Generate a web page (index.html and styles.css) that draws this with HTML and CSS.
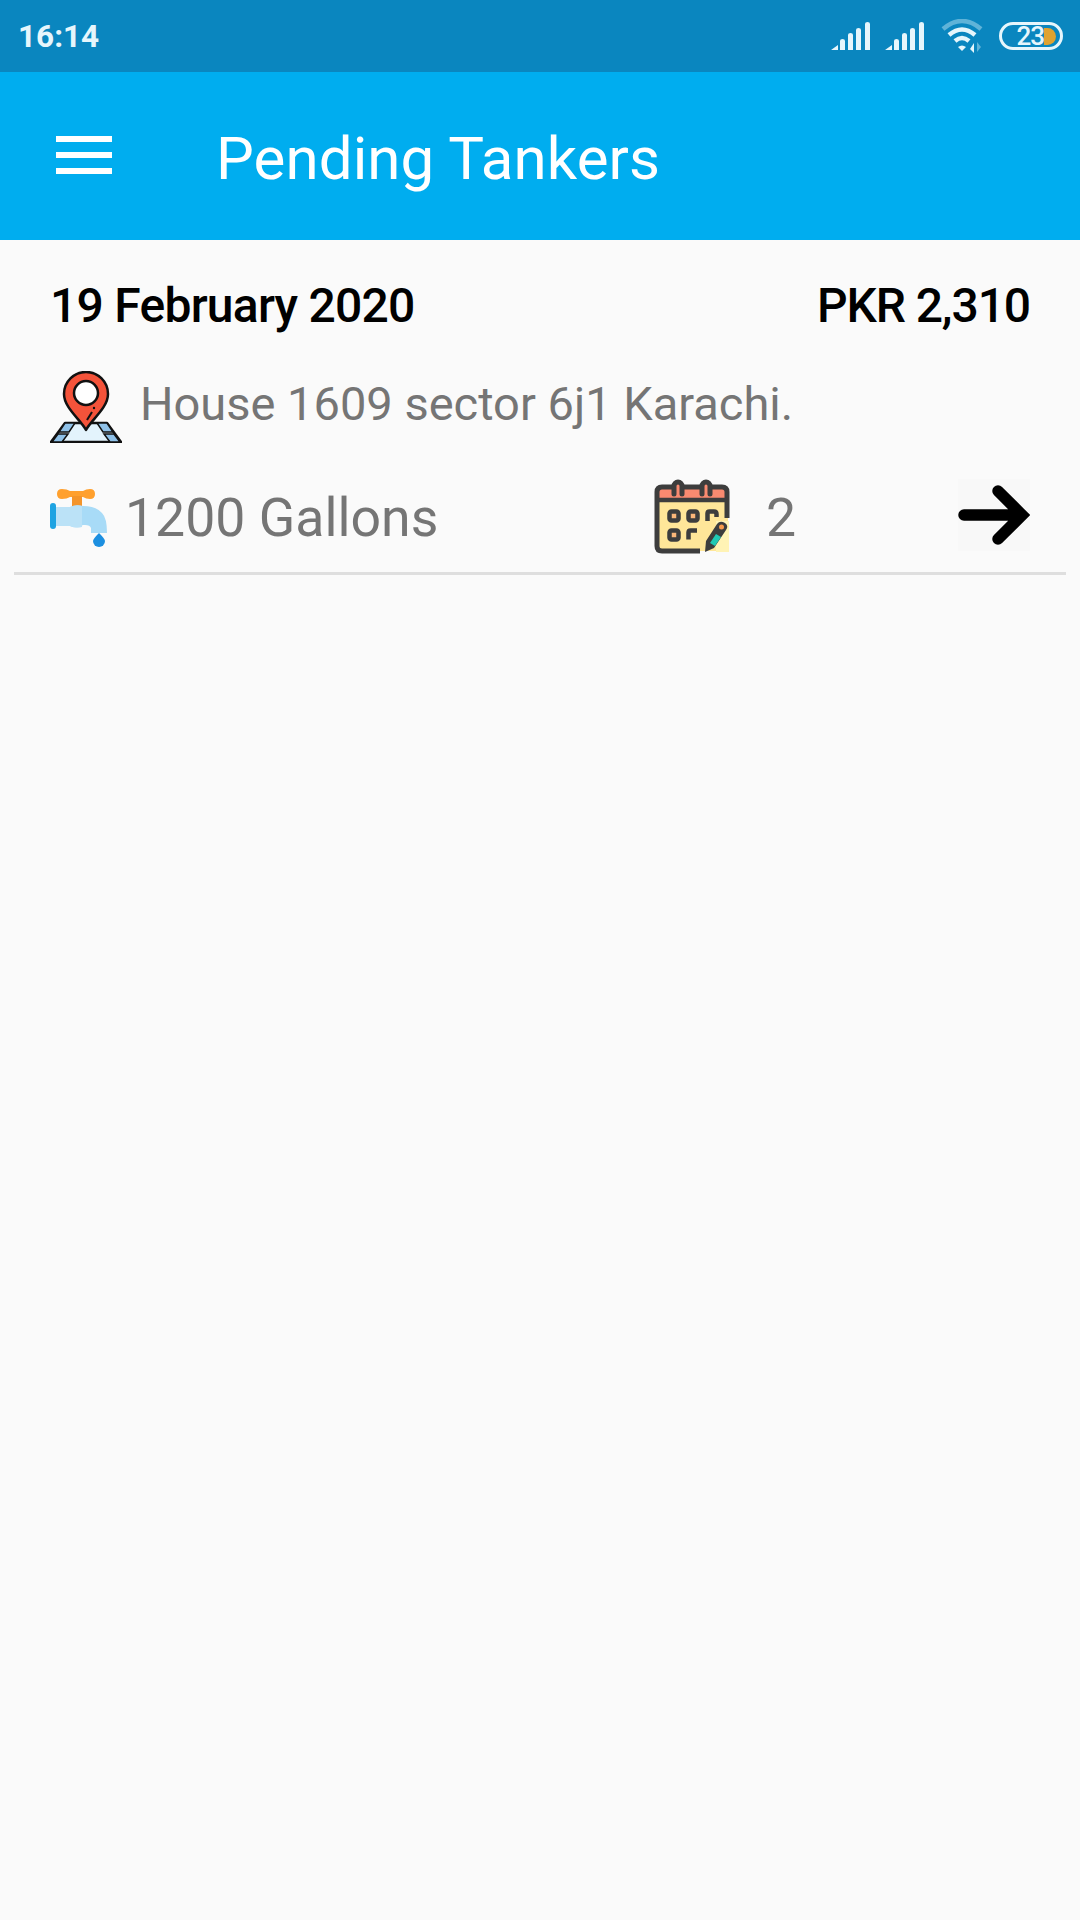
FILE: index.html
```html
<!DOCTYPE html>
<html lang="en">
<head>
    <meta charset="UTF-8">
    <meta name="viewport" content="width=device-width, initial-scale=1.0">
    <title>Pending Tankers</title>
    <link rel="stylesheet" href="styles.css">
</head>
<body>
    <div class="status-bar">
        <span class="clock">16:14</span>
        <div class="status-icons">
            <svg class="signal" width="42" height="30" viewBox="0 0 42 30">
                <path d="M1 29 L8 24 V29 Z M10 20 Q10 18 12.500 18 Q15 18 15 20 V29 H10 Z M18 14 Q18 12 20.500 12 Q23 12 23 14 V29 H18 Z M26 9 Q26 7 28.500 7 Q31 7 31 9 V29 H26 Z M35 3 Q35 1 37.500 1 Q40 1 40 3 V29 H35 Z" fill="#e6f6fc"/>
            </svg>
            <svg class="signal" width="42" height="30" viewBox="0 0 42 30">
                <path d="M1 29 L8 24 V29 Z M10 20 Q10 18 12.500 18 Q15 18 15 20 V29 H10 Z M18 14 Q18 12 20.500 12 Q23 12 23 14 V29 H18 Z M26 9 Q26 7 28.500 7 Q31 7 31 9 V29 H26 Z M35 3 Q35 1 37.500 1 Q40 1 40 3 V29 H35 Z" fill="#e6f6fc"/>
            </svg>
            <svg class="wifi" width="44" height="34" viewBox="0 0 44 34">
                <path d="M2 10 Q21 -6 40 10" fill="none" stroke="#5fb3d8" stroke-width="4.500"/>
                <path d="M8 16 Q21 5 34 16" fill="none" stroke="#e6f6fc" stroke-width="4.500"/>
                <path d="M14 22 Q21 16 28 22" fill="none" stroke="#e6f6fc" stroke-width="4.500"/>
                <path d="M17 28 Q21 25 25 28 L21 32 Z" fill="#e6f6fc"/>
                <path d="M33 24 V34 L29 30 Z" fill="#e6f6fc"/>
                <path d="M36 23 V33 L40 28 Z" fill="#5fb3d8"/>
            </svg>
            <div class="battery">
                <span class="battery-level">23</span>
                <span class="battery-fill"></span>
            </div>
        </div>
    </div>

    <div class="toolbar">
        <div class="menu-icon">
            <span></span>
            <span></span>
            <span></span>
        </div>
        <h1 class="toolbar-title">Pending Tankers</h1>
    </div>

    <div class="tanker-row">
        <div class="row-head">
            <span class="row-date">19 February 2020</span>
            <span class="row-price">PKR 2,310</span>
        </div>

        <div class="row-address">
            <svg class="pin-icon" width="72" height="72" viewBox="0 0 72 72">
                <!-- map sheet under the pin -->
                <path d="M15 52 H57 L71 71 H1 Z" fill="#e3f3fc" stroke="#111" stroke-width="2.500" stroke-linejoin="round"/>
                <path d="M15 52 H25 L19 61 H9 Z M47 52 H57 L63 61 H53 Z M8 63 H18 L12 71 H2 Z M54 63 H64 L70 71 H60 Z" fill="#8fc1e8" stroke="#111" stroke-width="1.500"/>
                <path d="M36 59 C31 49 14 37 14 23 A22 22 0 0 1 58 23 C58 37 41 49 36 59 Z" fill="#f4533a" stroke="#111" stroke-width="2.500" stroke-linejoin="round"/>
                <circle cx="36" cy="22" r="12" fill="#fff" stroke="#111" stroke-width="2.500"/>
                <path d="M37 49 L42 41" stroke="#111" stroke-width="2"/>
                <circle cx="44" cy="37" r="1.200" fill="#111"/>
            </svg>
            <span class="address-text">House 1609 sector 6j1 Karachi.</span>
        </div>

        <div class="row-details">
            <div class="detail-gallons">
                <svg class="tap-icon" width="58" height="60" viewBox="0 0 58 60">
                    <path d="M12 12 Q7 12 7 7 Q7 2 12 2 Q17 2 20 4 H33 Q36 2 40 2 Q45 2 45 7 Q45 12 40 12 Q36 12 33 10 H20 Q17 12 12 12 Z" fill="#ffa02e"/>
                    <path d="M22 9 H32 V20 H22 Z" fill="#f4952b"/>
                    <path d="M6 20 H20 Q26 17 33 19 Q46 19 52 26 Q57 31 57 46 H41 V41 Q40 38 35 38 H33 Q26 42 20 39 H6 Z" fill="#a8dbf7"/>
                    <path d="M6 20 H20 Q26 17 32 19 V40 Q26 42 20 39 H6 Z" fill="#bbe2f7"/>
                    <path d="M0 19 Q0 16 3 16 Q6 16 6 19 V39 Q6 42 3 42 Q0 42 0 39 Z" fill="#1ea3e2"/>
                    <path d="M49 46 Q55 52 55 54 A6 6 0 0 1 43 54 Q43 52 49 46 Z" fill="#1c8fe0"/>
                </svg>
                <span>1200 Gallons</span>
            </div>
            <div class="detail-count">
                <svg class="calendar-icon" width="76" height="76" viewBox="0 0 76 76">
                    <rect x="2" y="10" width="72" height="62" rx="6" fill="#ffe699"/>
                    <path d="M3 21 V13 Q3 8 8 8 H68 Q73 8 73 13 V21 Z" fill="#f98a70"/>
                    <path d="M46 72 H8 Q3 72 3 67 V13 Q3 8 8 8 H68 Q73 8 73 13 V39" fill="none" stroke="#3d3d3d" stroke-width="5"/>
                    <path d="M3 21 H73" stroke="#3d3d3d" stroke-width="4.500"/>
                    <path d="M20 15 V7 A4 4 0 0 1 28 7 V15 M48 15 V7 A4 4 0 0 1 56 7 V15" fill="#f98a70" stroke="#3d3d3d" stroke-width="5" stroke-linecap="round"/>
                    <g fill="#fbb77a" stroke="#3d3d3d" stroke-width="4.500">
                        <rect x="15.500" y="32.500" width="9" height="9" rx="2"/>
                        <rect x="34.500" y="32.500" width="9" height="9" rx="2"/>
                        <rect x="15.500" y="51.500" width="9" height="9" rx="2"/>
                    </g>
                    <path d="M53.500 42 V34.500 Q53.500 32.500 55.500 32.500 H60 Q62.500 32.500 62.500 35 V38 M34.500 60.500 V53.500 Q34.500 51.500 36.500 51.500 H43" fill="none" stroke="#3d3d3d" stroke-width="4.500"/>
                    <rect x="62" y="42" width="13" height="31" fill="#fff3b5"/>
                    <path d="M51 73 L52 62 L63 45 Q66 41 71 44 Q75 47 72 51 L60 69 Z" fill="#3d3d3d"/>
                    <path d="M56 64 L62 55 L67 58 L61 67 Z" fill="#20c9b4"/>
                    <circle cx="67.500" cy="48" r="2.500" fill="#f79a4d"/>
                </svg>
                <span>2</span>
            </div>
            <div class="detail-arrow">
                <svg width="72" height="72" viewBox="0 0 72 72">
                    <path d="M6 36 H60 M40 12 L64 36 L40 60" fill="none" stroke="#000" stroke-width="11.500" stroke-linecap="round" stroke-linejoin="miter"/>
                </svg>
            </div>
        </div>
    </div>
</body>
</html>
```

FILE: styles.css
```css
body {
    margin: 0;
    min-height: 1920px;
    background-color: #fafafa;
    font-family: Roboto, "Noto Sans", sans-serif;
}

.status-bar {
    height: 72px;
    box-sizing: border-box;
    padding: 0 17px 0 18px;
    display: flex;
    align-items: center;
    justify-content: space-between;
    background-color: #0a86bf;
}

.clock {
    color: #e6f6fc;
    font-size: 31.500px;
    font-weight: 700;
}

.status-icons {
    display: flex;
    align-items: center;
    gap: 12px;
}

.wifi {
    margin-left: 3px;
}

.battery {
    width: 64px;
    height: 28px;
    box-sizing: border-box;
    margin-left: 2px;
    border: 3px solid #e6f6fc;
    border-radius: 14px;
    display: flex;
    align-items: center;
    justify-content: flex-end;
    padding-right: 4px;
}

.battery-level {
    color: #e6f6fc;
    font-size: 26px;
    font-weight: 500;
    letter-spacing: -1px;
}

.battery-fill {
    width: 12px;
    height: 17px;
    background-color: #e0a22f;
    border-radius: 0 9px 9px 0;
}

.toolbar {
    height: 168px;
    display: flex;
    align-items: center;
    padding-left: 56px;
    background-color: #00adef;
}

.menu-icon {
    width: 56px;
    display: flex;
    flex-direction: column;
    gap: 10px;
    margin: 0 104px 2px 0;
}

.menu-icon span {
    height: 6px;
    background-color: #fff;
}

.toolbar-title {
    margin: 4px 0 0;
    color: #fff;
    font-size: 60px;
    font-weight: 400;
    letter-spacing: 0.1px;
}

.tanker-row {
    margin: 0 14px;
    padding: 0 36px 0;
    height: 335px;
    box-sizing: border-box;
    border-bottom: 3px solid #dedede;
}

.row-head {
    display: flex;
    justify-content: space-between;
    padding-top: 40px;
    color: #000;
    font-size: 48px;
    font-weight: 500;
    line-height: 52px;
}

.row-date {
    letter-spacing: -0.750px;
}

.row-price {
    letter-spacing: -1.100px;
}

.row-address {
    display: flex;
    align-items: center;
    margin-top: 39px;
    color: #757575;
    font-size: 47px;
}

.address-text {
    margin-left: 18px;
    padding-bottom: 7px;
}

.row-details {
    display: flex;
    align-items: center;
    margin-top: 36px;
    color: #757575;
    font-size: 53.600px;
}

.detail-gallons {
    display: flex;
    align-items: center;
    gap: 17px;
    width: 604px;
}

.detail-count {
    display: flex;
    align-items: center;
    gap: 36px;
    flex: 1;
}

.detail-arrow {
    display: flex;
    margin-bottom: 4px;
    background-color: #f8f8f8;
}
```
